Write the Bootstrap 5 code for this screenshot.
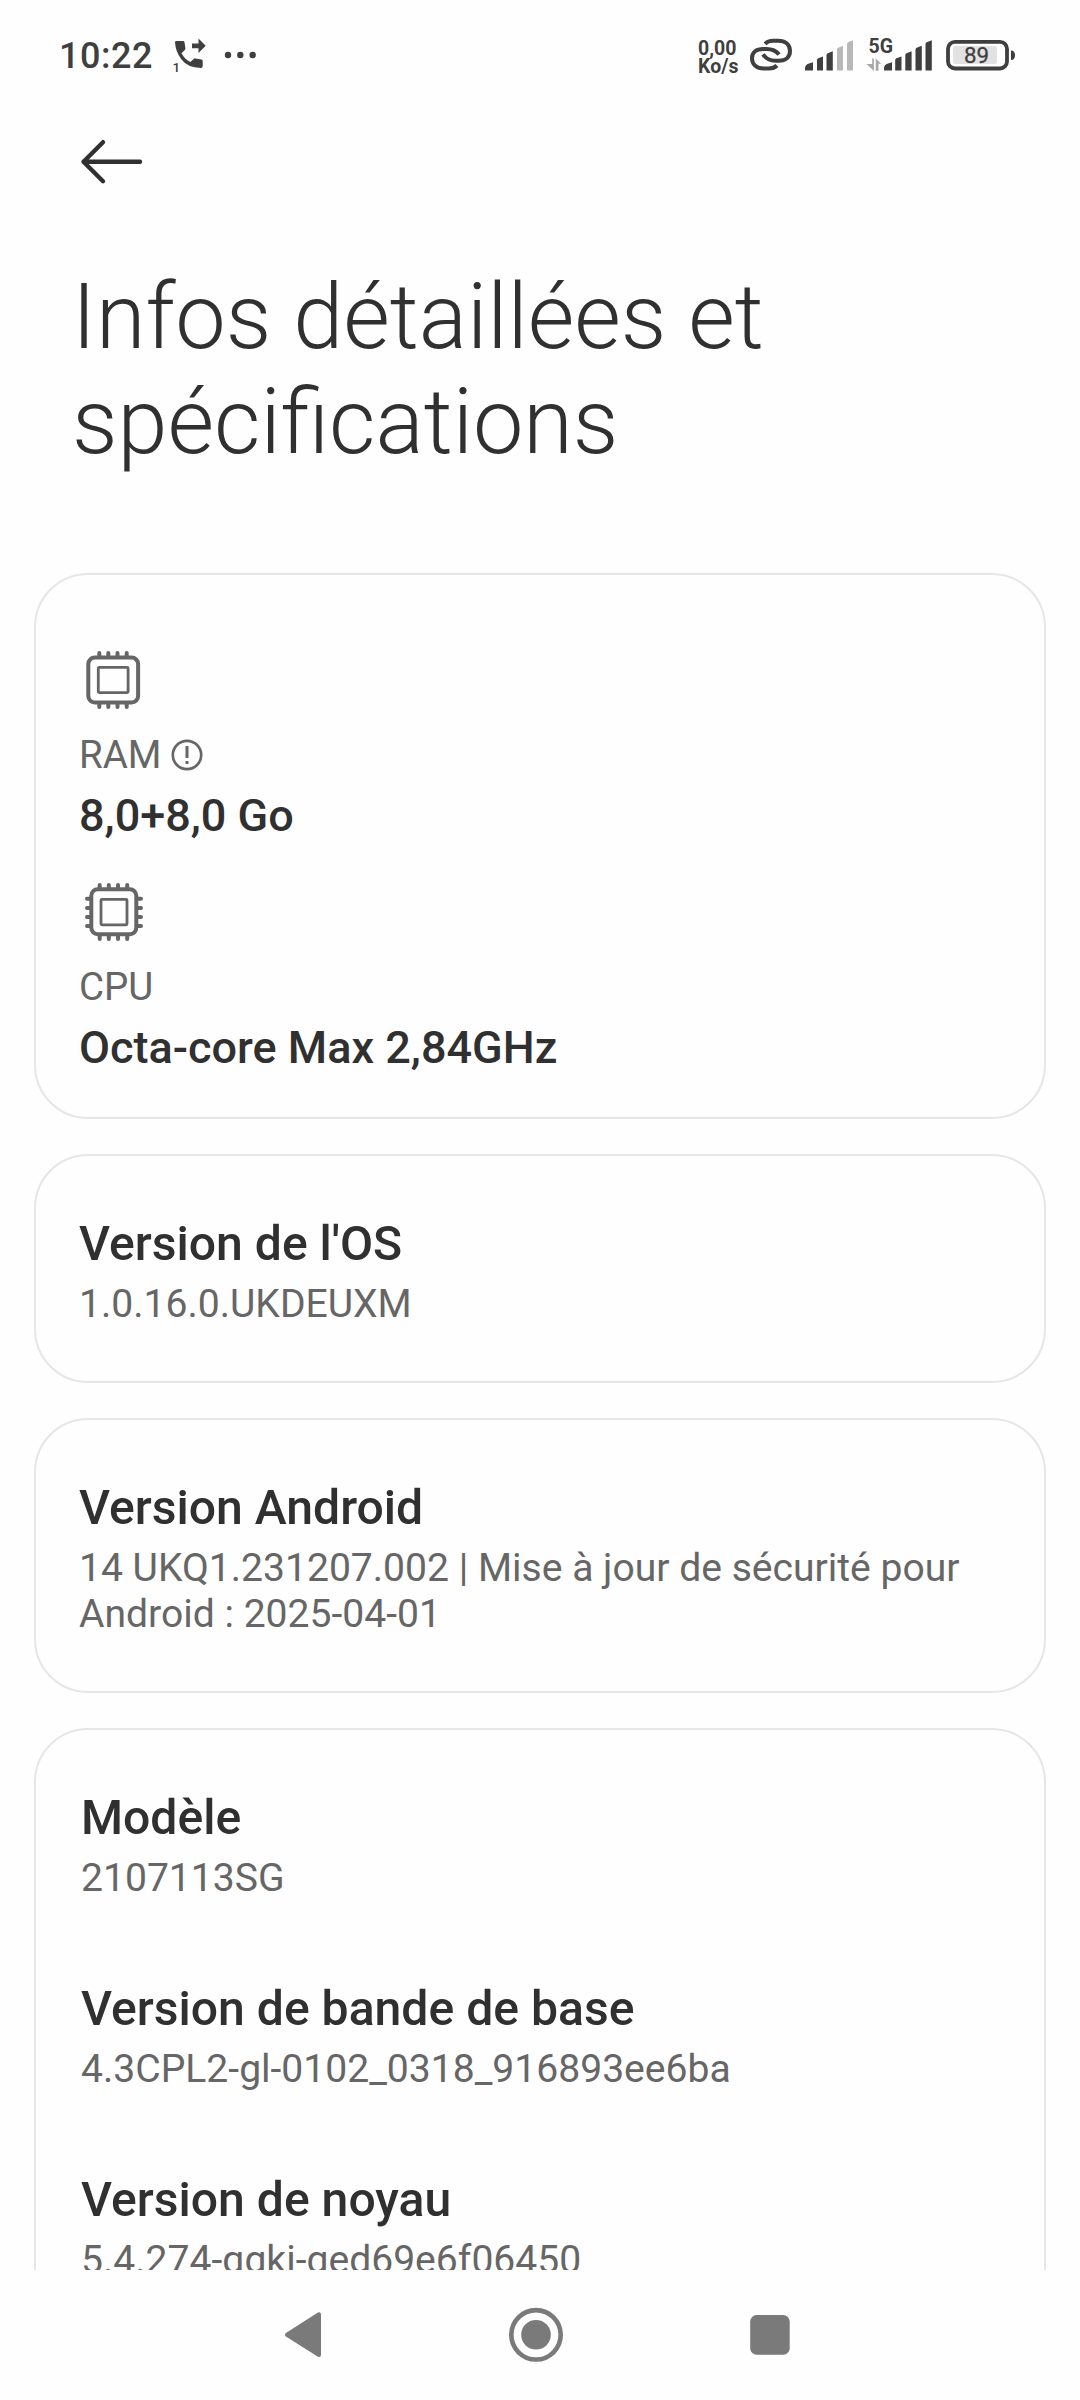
<!DOCTYPE html>
<html lang="fr">
<head>
<meta charset="utf-8">
<meta name="viewport" content="width=device-width, initial-scale=1">
<title>Infos détaillées et spécifications</title>
<link href="https://cdn.jsdelivr.net/npm/bootstrap@5.3.0/dist/css/bootstrap.min.css" rel="stylesheet">
<style>
  body { font-family: Roboto, "Noto Sans", sans-serif; background: #fefefe; color: #303030; height: 2400px; overflow: hidden; }
  svg { display: block; flex: none; }
  svg text { font-family: Roboto, sans-serif; }
  .status { height: 100px; padding: 32px 64px 0 59px; color: #3f3f3f; }
  .clock { font-size: 36px; line-height: 44px; font-weight: 500; letter-spacing: .5px; padding-top: 2px; }
  .dots { margin-left: 15px; margin-right: 441px; }
  .rate { font-size: 19.5px; line-height: 18px; font-weight: 700; padding-top: 8px; width: 41px; white-space: nowrap; }
  .topbar { height: 165px; padding: 36px 76px 0; }
  .page-title { font-size: 90px; line-height: 105px; font-weight: 300; padding: 0 72px; margin: 0 0 98px; }
  .scroller { overflow: hidden; height: 2270px; }
  .panel { border: 2px solid #e6e6e6; border-radius: 54px; background: #fefefe; margin: 0 34px 35px; padding: 0 43px; }
  .panel-hw { height: 546px; padding-top: 71px; }
  .panel-os { height: 229px; padding-top: 60px; }
  .panel-android { height: 275px; padding-top: 60px; }
  .panel-list { height: 760px; padding: 60px 45px 0; }
  .hw + .hw { margin-top: 36px; }
  .hw-name { font-size: 38.5px; line-height: 46px; color: #666; gap: 10px; margin-top: 14px; }
  .hw-value { font-size: 45px; line-height: 52px; font-weight: 500; margin-top: 12px; }
  .entry-title { font-size: 48.100px; line-height: 55px; font-weight: 500; }
  .entry-text { font-size: 39.100px; line-height: 46px; color: #666; margin-top: 10px; }
  .entry + .entry { margin-top: 80px; }
  .navkeys { height: 130px; padding: 36px 290.500px 0 284px; color: #7a7a7a; }
</style>
</head>
<body>
<div class="scroller">
  <header class="status d-flex align-items-start">
    <div class="clock">10:22</div>
    <svg class="ms-auto" width="38" height="44" viewBox="170 32 38 44" fill="currentColor">
      <path d="M176.500 41h6.500q1.300 0 1.500 1.300l.9 6q.1 1-.6 1.700l-3.300 3.300q3.500 6.500 8.900 8.700l3.300-3.100q.7-.7 1.700-.5l6 1.200q1.300.2 1.300 1.500v5q0 1.800-1.700 1.900-13.500-.2-19.700-8.700-5.800-7.800-6.300-17.300.1-1 1.500-1z"/>
      <path d="M192 43.500h6.500v-5l7.200 7.200-7.200 7.200v-4.700H192z"/>
      <text x="172.500" y="71.800" font-size="13.500" font-weight="500">1</text>
    </svg>
    <svg class="dots" width="34" height="44" viewBox="223 32 34 44" fill="currentColor">
      <circle cx="228" cy="55" r="3.200"/><circle cx="240.300" cy="55" r="3.200"/><circle cx="252.700" cy="55" r="3.200"/>
    </svg>
    <div class="rate">0,00<br>Ko/s</div>
    <svg width="46" height="44" viewBox="748 32 46 44" fill="none" stroke="currentColor" stroke-width="4" style="margin-left:9px">
      <path d="M765 43.800q3-3 8-3h5c7.500 0 12 4 12 10.200s-4.500 9.800-11 9.800h-3.500c-6 0-9.500-2-12.500-6.500"/>
      <path d="M777 65.500q-3 3-8 3h-5c-7.500 0-12-4-12-10.200s4.500-9.300 11-9.300h3.500c6 0 9.500 1.500 12.500 5.500"/>
    </svg>
    <svg width="50" height="44" viewBox="804 32 50 44" fill="currentColor" style="margin-left:10px">
      <path d="M805 70.500v-2q0-4 4-5l4-1.300v8.300zM817 70.500V60q0-1.300 1.200-1.800l4.800-1.700v14zM826.500 70.500V55q0-1.300 1.200-1.800l5.100-2v19.300z"/>
      <path fill="#b8b8b8" d="M837 70.500V49.500q0-1.300 1.200-1.800l4.800-1.900v24.700zM847 70.500V44q0-1.300 1.200-1.800l4.800-1.900v30.200z"/>
    </svg>
    <svg width="70" height="44" viewBox="864 32 70 44" fill="currentColor" style="margin-left:10px">
      <text x="868.500" y="52.500" font-size="19.500" font-weight="700">5G</text>
      <path fill="#a8a8a8" d="M872.200 58.500h1.700v12.500l-7.400-7h5.700zM875.700 58.500l5.500 5.300h-2.700v7h-2.800z"/>
      <path d="M884 70.500v-2q0-4 4-5l4-1.300v8.300zM895.200 70.500V60q0-1.300 1.200-1.800l5.100-1.700v14zM905.300 70.500V55q0-1.300 1.200-1.800l5.100-2v19.300zM915.500 70.500V49.500q0-1.300 1.200-1.800l5.100-1.900v24.700zM925.500 70.500V44q0-1.300 1.200-1.800l5.100-1.900v30.200z"/>
    </svg>
    <svg width="72" height="44" viewBox="944 32 72 44" fill="currentColor" style="margin-left:10px">
      <rect x="948" y="41.800" width="59" height="26.700" rx="7" fill="none" stroke="currentColor" stroke-width="3.800"/>
      <rect x="953" y="46" width="44" height="18" rx="2.500" fill="#e2e2e2"/>
      <path d="M1011 50.500q4 0 4 4.700t-4 4.700z"/>
      <text x="964" y="63.400" font-size="22.300" font-weight="400" stroke="currentColor" stroke-width=".3">89</text>
    </svg>
  </header>

  <div class="topbar">
    <svg width="72" height="52" viewBox="76 136 72 52" fill="none" stroke="#303030" stroke-width="4.400" stroke-linecap="round" stroke-linejoin="round"><path d="M140 161.700H83.500M103 142.200L83.500 161.700 103 181.200"/></svg>
  </div>

  <h1 class="page-title">Infos détaillées et<br>spécifications</h1>

  <main>
    <section class="panel panel-hw">
      <div class="hw">
        <svg width="72" height="72" viewBox="79 646 72 72" fill="none" stroke="#666" stroke-width="4">
          <rect x="88.300" y="657.600" width="49.800" height="45" rx="6.500"/>
          <rect x="98.300" y="667.300" width="29.800" height="25.300" rx="1" stroke-width="2.800"/>
          <path stroke-linecap="round" d="M99.300 653v4M108.300 653v4M117.500 653v4M126.700 653v4M99.300 703v4M108.300 703v4M117.500 703v4M126.700 703v4"/>
        </svg>
        <div class="hw-name d-flex align-items-center">RAM
          <svg width="32" height="32" viewBox="0 0 32 32" fill="none" stroke="#666" stroke-width="2.700"><circle cx="16" cy="16" r="14.200"/><path stroke-width="3" d="M16 7v12M16 22v3"/></svg>
        </div>
        <div class="hw-value">8,0+8,0 Go</div>
      </div>
      <div class="hw">
        <svg width="72" height="72" viewBox="79 878 72 72" fill="none" stroke="#666" stroke-width="4">
          <rect x="91.300" y="889.300" width="45" height="45" rx="6.500"/>
          <rect x="101" y="899.300" width="26" height="25.500" rx="1" stroke-width="2.800"/>
          <path stroke-linecap="round" d="M99.700 885v4M108.800 885v4M118 885v4M127.200 885v4M99.700 935v4M108.800 935v4M118 935v4M127.200 935v4M87 898.700h4M87 908h4M87 917h4M87 926h4M137 898.700h4M137 908h4M137 917h4M137 926h4"/>
        </svg>
        <div class="hw-name">CPU</div>
        <div class="hw-value">Octa-core Max 2,84GHz</div>
      </div>
    </section>

    <section class="panel panel-os">
      <div class="entry-title">Version de l'OS</div>
      <div class="entry-text">1.0.16.0.UKDEUXM</div>
    </section>

    <section class="panel panel-android">
      <div class="entry-title">Version Android</div>
      <div class="entry-text">14 UKQ1.231207.002 | Mise à jour de sécurité pour<br>Android : 2025-04-01</div>
    </section>

    <section class="panel panel-list">
      <div class="entry"><div class="entry-title">Modèle</div><div class="entry-text">2107113SG</div></div>
      <div class="entry"><div class="entry-title">Version de bande de base</div><div class="entry-text">4.3CPL2-gl-0102_0318_916893ee6ba</div></div>
      <div class="entry"><div class="entry-title">Version de noyau</div><div class="entry-text">5.4.274-qgki-ged69e6f06450</div></div>
    </section>
  </main>
</div>

<nav class="navkeys d-flex justify-content-between">
  <svg width="38" height="58" viewBox="284 2306 38 58" fill="currentColor" stroke="currentColor" stroke-width="4" stroke-linejoin="round"><path d="M319 2314.300v40.700L287 2334.800z"/></svg>
  <svg width="56" height="58" viewBox="508 2306 56 58" fill="currentColor"><circle cx="536" cy="2334.800" r="24.700" fill="none" stroke="currentColor" stroke-width="4.600"/><circle cx="536" cy="2334.800" r="14.800"/></svg>
  <svg width="40" height="58" viewBox="749.500 2306 40 58" fill="currentColor"><rect x="749.700" y="2315" width="39.500" height="39.700" rx="6.500"/></svg>
</nav>
<script src="https://cdn.jsdelivr.net/npm/bootstrap@5.3.0/dist/js/bootstrap.bundle.min.js"></script>
</body>
</html>
